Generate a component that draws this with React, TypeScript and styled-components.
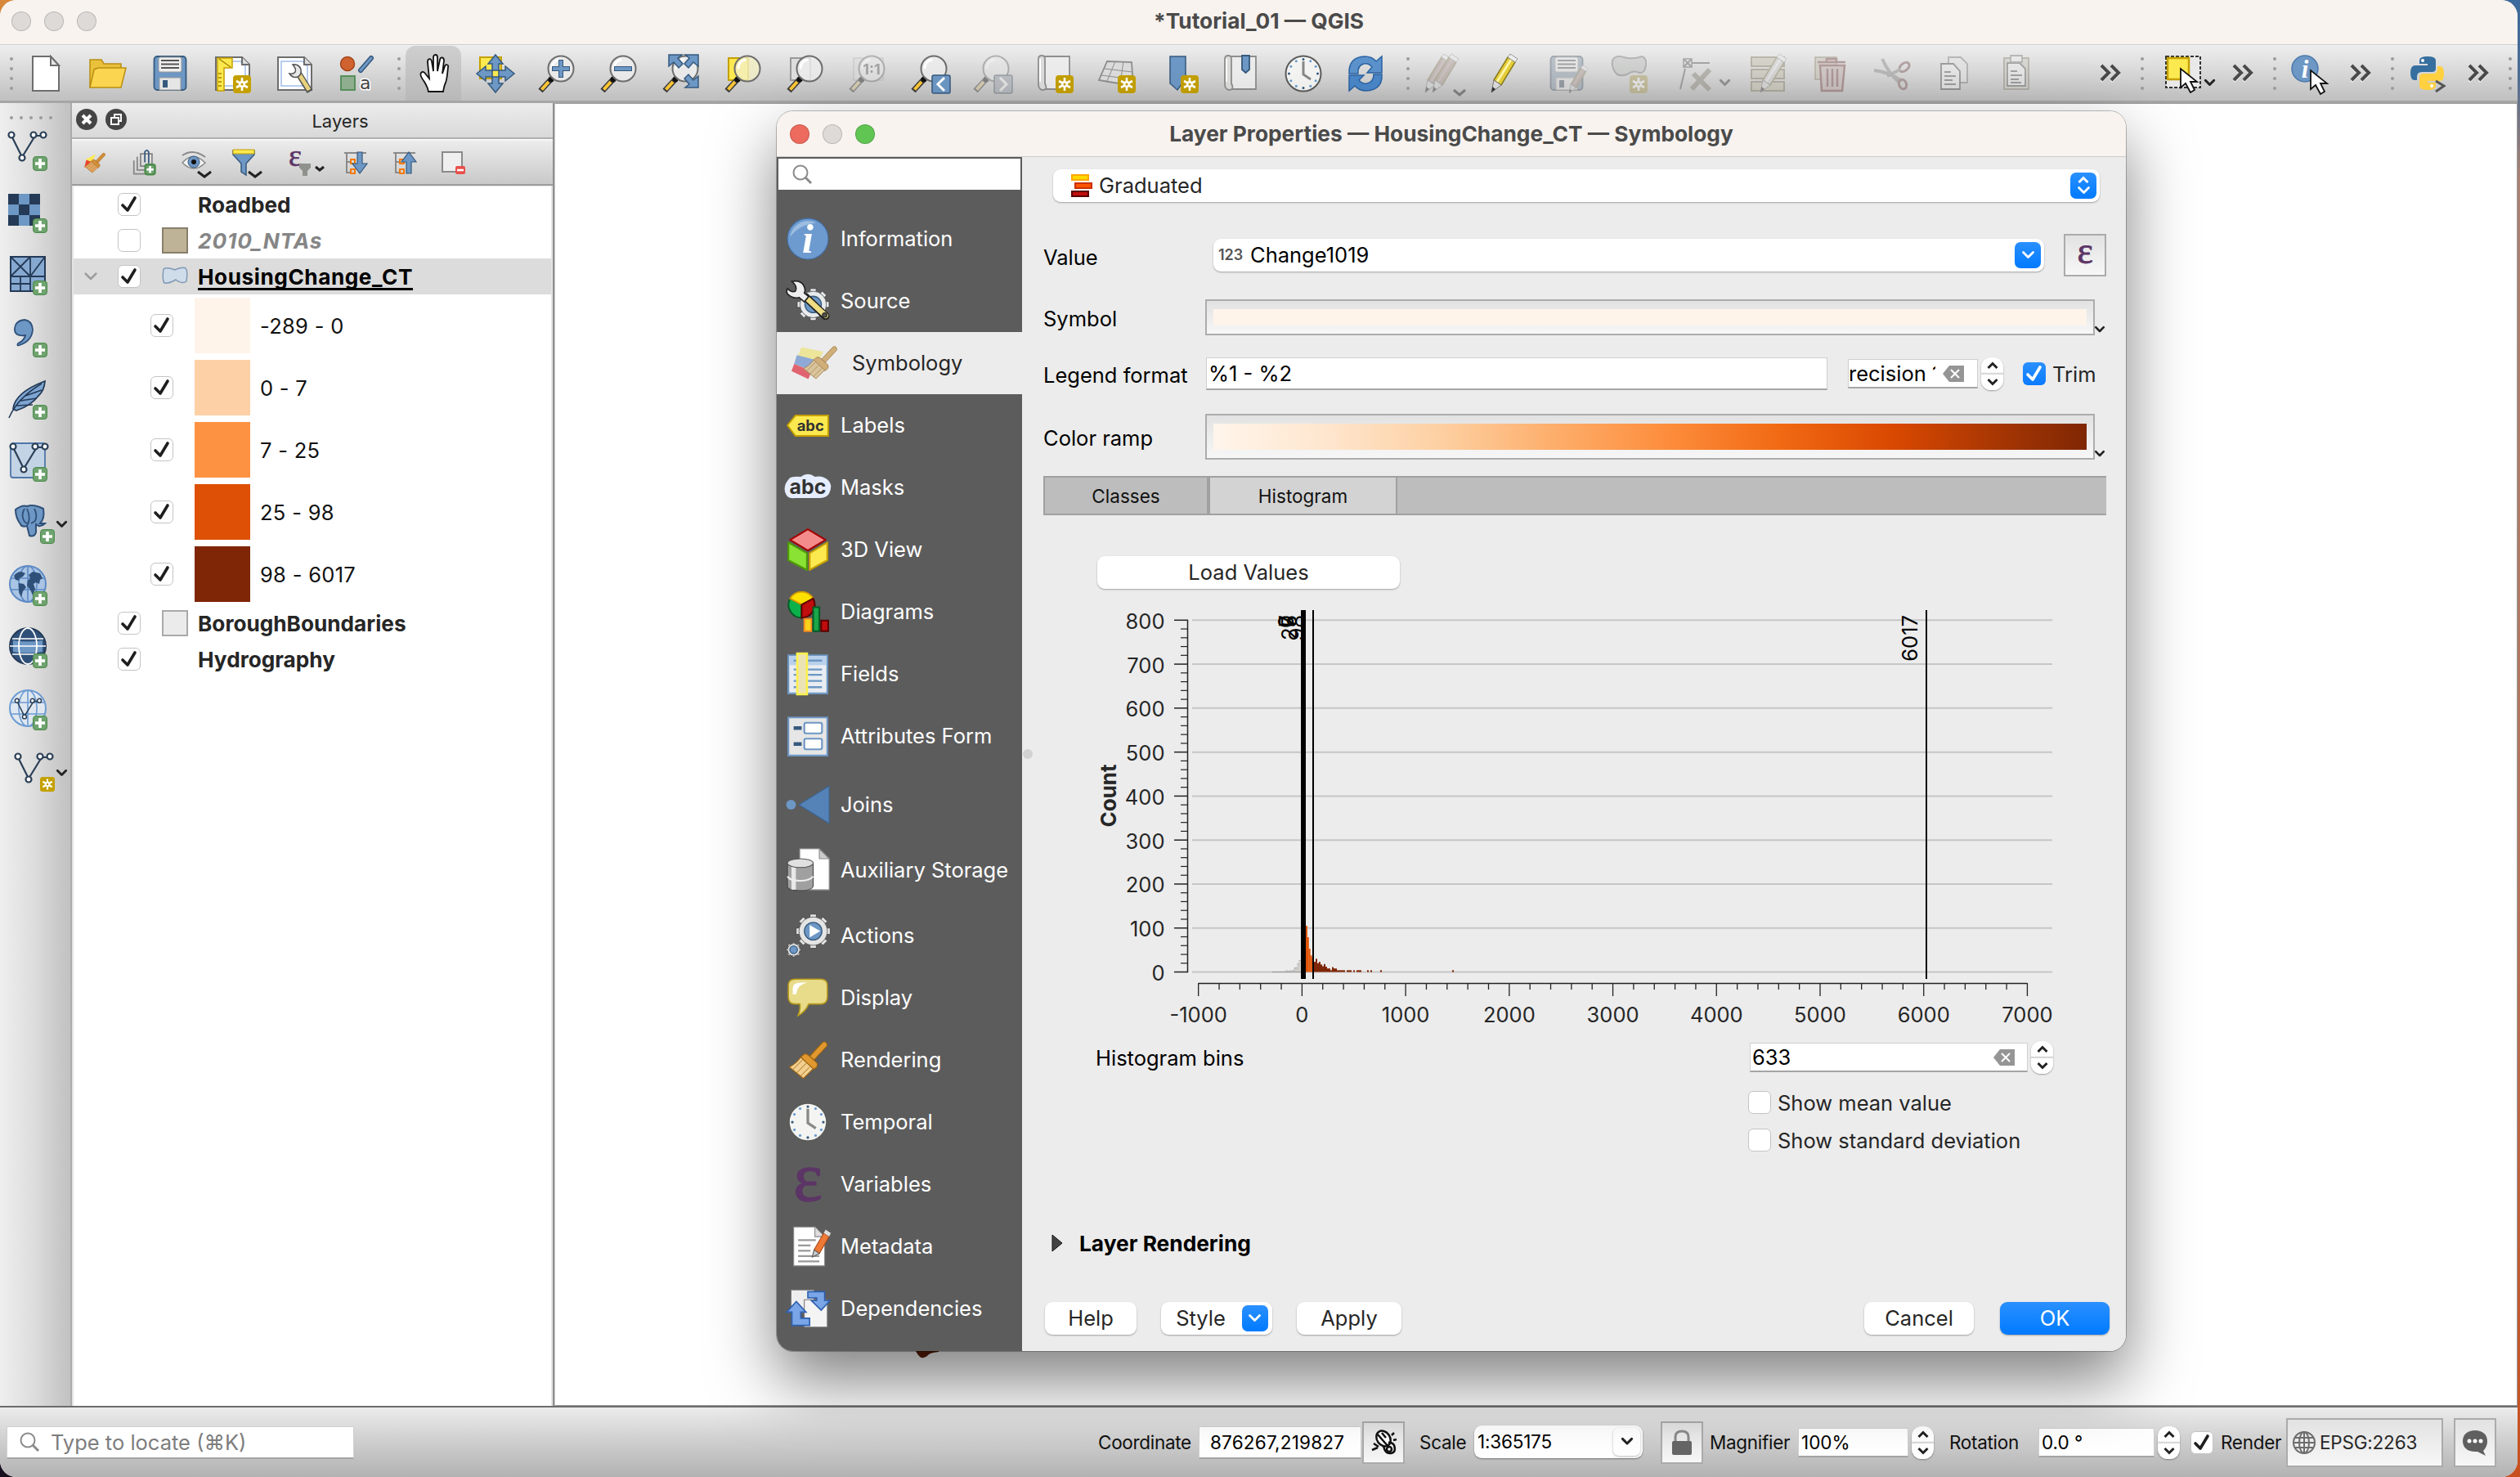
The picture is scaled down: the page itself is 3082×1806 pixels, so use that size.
import React from "react";
import styled, { createGlobalStyle, css } from "styled-components";

const GlobalStyle = createGlobalStyle`
  * { box-sizing: border-box; }
  body {
    margin: 0;
    font-family: Inter, "DejaVu Sans", sans-serif;
    font-size: 25.5px;
    color: #262626;
  }
  svg { display: block; flex: none; overflow: visible; }
`;

/* ---------- window frame ---------- */

const Desktop = styled.div`
  width: 3082px;
  height: 1806px;
  overflow: hidden;
  position: relative;
  background:
    linear-gradient(#3b6a9c 0, #4b6c94 5%, #a98273 12%, #b4735a 60%, #c8501f 100%) right / 60px 100% no-repeat,
    linear-gradient(#d8883a 0, #16101e 100%);
`;
const AppWindow = styled.div`
  width: 3079px;
  height: 1806px;
  border-radius: 20px;
  overflow: hidden;
  display: flex;
  flex-direction: column;
  background: #ececec;
`;
const TitleBar = styled.div`
  height: 54px;
  flex: none;
  display: flex;
  align-items: center;
  background: #f8f3ef;
  padding: 0 14px 2px;
  gap: 16px;
`;
const Light = styled.span<{ $color?: string }>`
  width: 24px;
  height: 24px;
  border-radius: 50%;
  background: ${(p) => p.$color || "#dedad7"};
  border: 1px solid rgba(0, 0, 0, 0.16);
`;
const Title = styled.div`
  flex: 1;
  text-align: center;
  font-weight: 700;
  font-size: 26.3px;
  color: #4a4a4a;
  padding-right: 120px;
  padding-bottom: 1px;
  white-space: nowrap;
`;

/* ---------- main toolbar ---------- */

const Toolbar = styled.div`
  height: 72px;
  flex: none;
  display: flex;
  align-items: stretch;
  background: linear-gradient(#eeeeee, #dcdcdc 40%, #c2c2c2 94%);
  border-top: 1px solid #cfcfcf;
  border-bottom: 3px solid #a6a6a6;
`;
const Tool = styled.div<{ $w?: number; $pl?: number; $active?: boolean; $off?: boolean }>`
  width: ${(p) => p.$w || 76}px;
  flex: none;
  display: flex;
  align-items: center;
  justify-content: center;
  padding: 2px 0 0 ${(p) => p.$pl || 0}px;
  ${(p) =>
    p.$active &&
    css`
      width: 68px;
      margin: 1px 4px 0;
      background: linear-gradient(#cfcfcf, #b8b8b8);
      border-radius: 12px 12px 0 0;
    `}
  ${(p) =>
    p.$off &&
    css`
      & > svg {
        opacity: 0.42;
        filter: grayscale(0.55);
      }
    `}
`;
const LowMenu = styled.span`
  padding: 22px 0 0 2px;
`;
const HandleBox = styled.div<{ $row?: boolean }>`
  flex: none;
  display: flex;
  gap: 8px;
  ${(p) =>
    p.$row
      ? css`
          padding: 16px 0 0 12px;
          height: 21px;
        `
      : css`
          flex-direction: column;
          width: 18px;
          padding: 15px 0 0 12px;
        `}
  & > i {
    width: 4px;
    height: 4px;
    border-radius: 2px;
    background: #9b9b9b;
    flex: none;
  }
`;
const More = styled.div<{ $ml?: number }>`
  width: 50px;
  margin-left: ${(p) => p.$ml || 0}px;
  display: flex;
  align-items: center;
  justify-content: center;
  padding-top: 2px;
`;

const Handle = ({ row }: { row?: boolean }) => (
  <HandleBox $row={row}>
    <i />
    <i />
    <i />
    <i />
    {row && <i />}
  </HandleBox>
);
const Chevron = ({ w = 12, color = "#222", sw = 3 }: { w?: number; color?: string; sw?: number }) => (
  <svg width={w} height={w * 0.6} viewBox="0 0 20 12">
    <path d="M2 2l8 8 8-8" fill="none" stroke={color} strokeWidth={(sw * 20) / w} strokeLinecap="round" strokeLinejoin="round" />
  </svg>
);
const DoubleArrow = () => (
  <svg width="26" height="22" viewBox="0 0 26 22">
    <path d="M2 3l9 9-9 9M14 3l9 9-9 9" fill="none" stroke="#fff" strokeWidth="3" opacity=".7" />
    <path d="M2 1l9 9-9 9M14 1l9 9-9 9" fill="none" stroke="#4a4a4a" strokeWidth="4" />
  </svg>
);

/* ---------- icon building blocks ---------- */

const Svg = ({ s = 48, children }: { s?: number; children?: React.ReactNode }) => (
  <svg width={s} height={s} viewBox="0 0 48 48" fill="none">
    {children}
  </svg>
);
const NewBadge = ({ x = 25, y = 26 }: { x?: number; y?: number }) => (
  <g transform={`translate(${x} ${y})`}>
    <rect width="22" height="22" rx="4" fill="#c4a000" />
    <path d="M11 3v16M4 7l14 8M18 7L4 15" stroke="#fff" strokeWidth="2.6" />
    <circle cx="11" cy="11" r="4" fill="#fff" />
    <circle cx="11" cy="11" r="1.6" fill="#c4a000" />
  </g>
);
const PlusBadge = ({ x = 30, y = 30, s = 18 }: { x?: number; y?: number; s?: number }) => (
  <g transform={`translate(${x} ${y}) scale(${s / 18})`}>
    <rect x=".5" y=".5" width="17" height="17" rx="3.5" fill="#6fa36f" stroke="#4b8a4b" />
    <path d="M9 3v12M3 9h12" stroke="#fff" strokeWidth="3.6" />
  </g>
);
const Lens = ({ children, glass = "#eeeeee" }: { children?: React.ReactNode; glass?: string }) => (
  <g>
    <path d="M15 32L3 45" stroke="#3a3a3a" strokeWidth="7" />
    <path d="M13 34L4.500 43.500" stroke="#fcc636" strokeWidth="4" />
    <circle cx="16" cy="31" r="3.500" fill="#111" />
    <circle cx="28" cy="18" r="15.500" fill={glass} fillOpacity=".8" stroke="#6d6d6d" strokeWidth="2" />
    <path d="M17 17a11 11 0 018-10" stroke="#fff" strokeWidth="3" strokeLinecap="round" />
    {children}
  </g>
);
const Pencil = ({ fill = "#e6cf3a", shine = "#fff8b0", x = 0 }: { fill?: string; shine?: string; x?: number }) => (
  <g transform={`translate(${x} 0)`}>
    <path d="M10 32L27 4l9 6-17 28z" fill={fill} stroke="#8a7b1c" strokeWidth="1.500" />
    <path d="M14 34L31 7" stroke={shine} strokeWidth="2.500" />
    <path d="M27 4l3-4 9 6-3 4z" fill="#eee" stroke="#999" />
    <path d="M10 32l9 6-12 9z" fill="#ddd" stroke="#777" />
    <path d="M8.500 40L7 47l5-4z" fill="#333" />
  </g>
);
const Clock = () => (
  <g>
    <circle cx="24" cy="24" r="21.500" fill="#f4f5f3" stroke="#5a5c5a" strokeWidth="2" />
    {Array.from({ length: 12 }, (_, i) => {
      const a = (i * Math.PI) / 6;
      return <circle key={i} cx={24 + 17.5 * Math.sin(a)} cy={24 - 17.5 * Math.cos(a)} r="1.500" fill={i % 3 ? "#6a9ccf" : "#36597d"} />;
    })}
    <path d="M24 9v16l9 6" stroke="#888a85" strokeWidth="3" />
  </g>
);
const Cursor = ({ x = 0, y = 0 }: { x?: number; y?: number }) => (
  <path transform={`translate(${x} ${y})`} d="M0 0v23l6-5 6 11 5-3-5-10h8z" fill="#fff" stroke="#111" strokeWidth="1.800" />
);
const Gear = ({ cx, cy, r, fill = "#e4e4e4" }: { cx: number; cy: number; r: number; fill?: string }) => (
  <g>
    {Array.from({ length: 8 }, (_, i) => (
      <rect key={i} x={cx - r * 0.22} y={cy - r * 1.2} width={r * 0.44} height={r * 0.5} fill={fill} stroke="#444" strokeWidth=".8" transform={`rotate(${i * 45} ${cx} ${cy})`} />
    ))}
    <circle cx={cx} cy={cy} r={r} fill={fill} stroke="#555" strokeWidth=".8" />
    <circle cx={cx} cy={cy} r={r * 0.9} fill={fill} />
    <circle cx={cx} cy={cy} r={r * 0.62} fill="#6d97c4" stroke="#36597d" strokeWidth="1.200" />
  </g>
);
const Epsilon = ({ x, y, size }: { x: number; y: number; size: number }) => (
  <text x={x} y={y} fontSize={size} fontFamily="Liberation Serif, serif" fill="#5c3566" stroke="#5c3566" strokeWidth={size / 60} textAnchor="middle">
    ε
  </text>
);
const Brush = ({ handle = "#c9a467", bristle = "#d5bc92", stroke = "#8a6a38" }: { handle?: string; bristle?: string; stroke?: string }) => (
  <g>
    <path d="M26 20L40 5q3-3 5 0t-1 5L31 24z" fill={handle} stroke={stroke} />
    <path d="M19 18q3-2 6 1l9 8q2 3-1 6l-3 2-14-14z" fill={handle} stroke={stroke} />
    <path d="M16 21l14 13-11 11L3 32q7-3 13-11z" fill={bristle} stroke={stroke} />
    <path d="M18 24L7 35M22 28L11 39M26 32L15 43" stroke={stroke} strokeWidth=".8" />
  </g>
);
const VectorV = () => (
  <g stroke="#2b4057" strokeWidth="2.200">
    <path d="M4 5l13 26L33 5h10" />
    {[[4, 4], [17, 32], [31, 4], [43, 4]].map(([x, y]) => (
      <circle key={x} cx={x} cy={y} r="3.500" fill="#fff" />
    ))}
  </g>
);
const Floppy = () => (
  <g>
    <rect x="4.500" y="3" width="39" height="41" rx="4" fill="#6d97c4" stroke="#36597d" strokeWidth="1.800" />
    <rect x="10" y="4" width="28" height="18" rx="2" fill="#eee" stroke="#999" />
    <path d="M13 8h22M13 12.500h22M13 17h22" stroke="#555" strokeWidth="2" />
    <rect x="11" y="29" width="26" height="15" fill="#e6e6e6" stroke="#999" />
    <rect x="15" y="32" width="6" height="9" fill="#36597d" />
  </g>
);
const Page = () => (
  <g>
    <path d="M4 4h32l9 9v31H4z" fill="#fff" stroke="#6d6d6d" strokeWidth="2" />
    <path d="M8 9h26l6 6v24H8z" stroke="#b8cdf0" strokeWidth="2" />
    <path d="M36 4v9h9" fill="#ddd" stroke="#6d6d6d" strokeWidth="2" />
  </g>
);
const MapSheet = () => (
  <g>
    <path d="M8 3h34v40H10" fill="#ececec" stroke="#8d8f8c" strokeWidth="1.800" />
    <path d="M4 6q0-4 4-4t4 4v30q4 8-3 8-5-1-5-7z" fill="#dcdcdc" stroke="#8d8f8c" strokeWidth="1.800" />
    <path d="M6 6v28" stroke="#fff" strokeWidth="2" />
  </g>
);
const arrowUp = "M0 -23l9 11h-5v8h-8v-8h-5z";

/* ---------- toolbar icons ---------- */

const I = {
  newDoc: (
    <Svg>
      <path d="M8 3h22l10 11v31H8z" fill="#fff" stroke="#6d6d6d" strokeWidth="2" />
      <path d="M30 3v11h10z" fill="#e4e4e4" stroke="#6d6d6d" strokeWidth="2" />
    </Svg>
  ),
  open: (
    <Svg>
      <path d="M2 41V7h14l3 5h21v6H9z" fill="#e9c13a" stroke="#b98e12" strokeWidth="1.500" />
      <path d="M7 19l5-2h34l-6 24H2z" fill="#fbd54f" stroke="#b98e12" strokeWidth="1.500" />
    </Svg>
  ),
  save: (
    <Svg>
      <Floppy />
    </Svg>
  ),
  layout: (
    <Svg>
      <Page />
      <path d="M6 5h18v12H14v28H6z" fill="#fce94f" stroke="#c4a000" strokeWidth="1.500" />
      <path d="M7 24h4M7 29h4M7 34h4M7 39h4M8 6l14 10" stroke="#a58400" strokeWidth="1.500" />
      <NewBadge />
    </Svg>
  ),
  manager: (
    <Svg>
      <Page />
      <path d="M28 22l15 24" stroke="#555" strokeWidth="8" />
      <path d="M30 25l12 19" stroke="#e8d27e" strokeWidth="5" />
      <path d="M22 13q8-1 10 6 1 7-4 9-6 2-10-4 5 1 7-2t-3-9z" fill="#e8e8e8" stroke="#555" strokeWidth="1.500" />
    </Svg>
  ),
  style: (
    <Svg>
      <circle cx="13" cy="12" r="8.500" fill="#d0622f" stroke="#a3431a" strokeWidth="1.500" />
      <path d="M42 5L29 20" stroke="#36597d" strokeWidth="6" strokeLinecap="round" />
      <path d="M42 5L29 20" stroke="#6d97c4" strokeWidth="3" strokeLinecap="round" />
      <rect x="5" y="27" width="17" height="17" fill="#8fae90" stroke="#4f8a53" strokeWidth="1.800" />
      <text x="28" y="43" fontSize="22" fontFamily="DejaVu Sans, sans-serif" fill="#444" stroke="#fff" strokeWidth="3" paintOrder="stroke">
        a
      </text>
    </Svg>
  ),
  pan: (
    <Svg>
      <path
        d="M18 45c-1-6-3-8-5-12-3-4-6-9-4-11s4-1 6 2l4 5-2-20c0-5 4-5 5-1l2 12V3c0-4 5-4 5 0v17l3-14c1-4 5-3 5 1l-2 16 3-9c1-3 5-2 4 1-1 8-1 14-3 19-2 4-2 6-3 11z"
        fill="#fff"
        stroke="#111"
        strokeWidth="1.800"
      />
    </Svg>
  ),
  panSel: (
    <Svg>
      <rect x="5" y="4" width="26" height="26" fill="#fce94f" stroke="#c4a000" strokeWidth="2" />
      {[0, 90, 180, 270].map((a) => (
        <path key={a} d={arrowUp} transform={`translate(24 24) rotate(${a})`} fill="#6d97c4" stroke="#36597d" strokeWidth="1.500" />
      ))}
    </Svg>
  ),
  zoomIn: (
    <Svg>
      <Lens>
        <path d="M28 7v22M17 18h22" stroke="#36597d" strokeWidth="6" />
        <path d="M28 8v20M18 18h20" stroke="#6d97c4" strokeWidth="4" />
      </Lens>
    </Svg>
  ),
  zoomOut: (
    <Svg>
      <Lens>
        <path d="M17 18h22" stroke="#36597d" strokeWidth="6" />
        <path d="M18 18h20" stroke="#6d97c4" strokeWidth="4" />
      </Lens>
    </Svg>
  ),
  zoomFull: (
    <Svg>
      <Lens />
      {["translate(4 0)", "translate(48 0) scale(-1 1)", "translate(48 42) scale(-1 -1)"].map((t) => (
        <path key={t} transform={t} d="M4 1h16l-5 4 6 7-5 5-6-7-6 5z" fill="#6d97c4" stroke="#36597d" strokeWidth="1.500" />
      ))}
    </Svg>
  ),
  zoomSel: (
    <Svg>
      <rect x="5" y="5" width="24" height="27" fill="#fce94f" stroke="#c4a000" strokeWidth="2" />
      <Lens glass="#f3efc4" />
    </Svg>
  ),
  zoomLayer: (
    <Svg>
      <rect x="5" y="5" width="24" height="27" fill="#dedede" stroke="#9a9a9a" strokeWidth="2" />
      <Lens />
    </Svg>
  ),
  zoomNative: (
    <Svg>
      <rect x="6" y="5" width="36" height="27" fill="#ddd" stroke="#9a9a9a" />
      <Lens>
        <text x="28" y="25" fontSize="18" fontWeight="700" textAnchor="middle" fill="#555">
          1:1
        </text>
      </Lens>
    </Svg>
  ),
  zoomLast: (
    <Svg>
      <Lens />
      <rect x="26" y="26" width="22" height="22" rx="2" fill="#6d97c4" stroke="#36597d" strokeWidth="1.500" />
      <path d="M41 29l-8 8 8 8" stroke="#fff" strokeWidth="3" />
    </Svg>
  ),
  zoomNext: (
    <Svg>
      <Lens />
      <rect x="26" y="26" width="22" height="22" rx="2" fill="#8fa3b8" stroke="#36597d" strokeWidth="1.500" />
      <path d="M33 29l8 8-8 8" stroke="#fff" strokeWidth="3" />
    </Svg>
  ),
  newMap: (
    <Svg>
      <MapSheet />
      <NewBadge />
    </Svg>
  ),
  new3d: (
    <Svg>
      <path d="M12 9l30 1 2 29-18-3-24-4z" fill="#dcdcdc" stroke="#8d8f8c" strokeWidth="1.800" />
      <path d="M22 9L12 33M32 9l-4 27M9 18l34 4M5 26l38 5" stroke="#8d8f8c" />
      <NewBadge />
    </Svg>
  ),
  newBookmark: (
    <Svg>
      <path d="M13 3h19v27l-10 14-9-8z" fill="#6d97c4" stroke="#36597d" strokeWidth="1.500" />
      <NewBadge x={26} />
    </Svg>
  ),
  bookmarks: (
    <Svg>
      <MapSheet />
      <path d="M25 2h9v17l-4.500 4L25 19z" fill="#6d97c4" stroke="#36597d" strokeWidth="1.800" />
    </Svg>
  ),
  clock: (
    <Svg>
      <Clock />
    </Svg>
  ),
  refresh: (
    <Svg>
      <path d="M4 24Q3 4 23 3q9 0 14 6l7-6v20H26l6-7q-4-5-10-4-8 2-7 12z" fill="#5c92cc" stroke="#2c63a3" strokeWidth="1.500" />
      <path d="M44 25q1 19-19 20-9 0-14-6l-7 6V26h18l-6 6q4 5 10 4 8-2 8-11z" fill="#4a86c8" stroke="#2c63a3" strokeWidth="1.500" />
    </Svg>
  ),
  pencils: (
    <Svg>
      <Pencil fill="#b98a7c" shine="#c9a194" x={-4} />
      <Pencil fill="#b98a7c" shine="#c9a194" x={5} />
      <path d="M38 44l7 6 7-6" stroke="#222" strokeWidth="3" />
    </Svg>
  ),
  pencil: (
    <Svg>
      <Pencil x={1} />
    </Svg>
  ),
  saveEdits: (
    <Svg>
      <Floppy />
      <g transform="translate(22 14) scale(.72)">
        <Pencil fill="#b98a7c" shine="#c9a194" />
      </g>
    </Svg>
  ),
  addPoly: (
    <Svg>
      <path d="M4 8q3-7 14-4t22-1q6 2 5 10-1 11-8 10-8-4-15 2-12 4-16-5-3-6-2-12z" fill="#b9c0b9" stroke="#777" strokeWidth="2" />
      <NewBadge />
    </Svg>
  ),
  vertex: (
    <Svg>
      <rect x="6" y="6" width="10" height="10" stroke="#555" strokeWidth="1.500" />
      <path d="M6 6l10 10M16 6L6 16M16 11h22M8 18L2 43" stroke="#555" strokeWidth="2" />
      <path d="M16 43l22-24M18 24l20 20" stroke="#8c815f" strokeWidth="6" />
    </Svg>
  ),
  attrTable: (
    <Svg>
      {[4, 19, 34].map((y) => (
        <path key={y} d={`M4 ${y}h40v11H4z`} fill="#cdbf8e" stroke="#8d7a3c" strokeWidth="2" />
      ))}
      <Pencil x={8} fill="#ccc" shine="#eee" />
    </Svg>
  ),
  trash: (
    <Svg>
      <rect x="6" y="4" width="26" height="27" fill="#cdbf8e" stroke="#8d7a3c" strokeWidth="1.500" />
      <path d="M12 14h30l-3 31H14zM9 10h34M20 10V6h12v4M21 18v22M27 18v22M33 18v22" fill="#d9a7a7" stroke="#a33" strokeWidth="2.500" />
    </Svg>
  ),
  cut: (
    <Svg>
      <path d="M2 20q18 2 34 13M12 6q8 18 20 28" stroke="#888" strokeWidth="4" />
      <ellipse cx="39" cy="16" rx="7" ry="4.500" transform="rotate(-40 39 16)" stroke="#a04848" strokeWidth="3" />
      <ellipse cx="37" cy="37" rx="4.500" ry="6" transform="rotate(-20 37 37)" stroke="#a04848" strokeWidth="3" />
      <path d="M18 27l16-8" stroke="#888" strokeWidth="4" />
    </Svg>
  ),
  copy: (
    <Svg>
      <path d="M17 4h15l8 8v23H17z" fill="#e8e8e8" stroke="#777" strokeWidth="1.800" />
      <path d="M8 12h15l8 9v22H8z" fill="#f4f4f4" stroke="#444" strokeWidth="1.800" />
      <path d="M12 22h8M12 27h14M12 32h10M12 37h14" stroke="#555" strokeWidth="2" />
    </Svg>
  ),
  paste: (
    <Svg>
      <path d="M9 5h30v38H9z" fill="#cfc9ae" stroke="#8d845c" strokeWidth="2" />
      <path d="M13 11h15l7 7v21H13z" fill="#f4f4f4" stroke="#555" strokeWidth="1.800" />
      <path d="M17 2h14v8H17z" fill="#eee" stroke="#777" strokeWidth="1.800" />
      <path d="M17 21h8M17 26h14M17 31h10M17 35h13" stroke="#555" strokeWidth="2" />
    </Svg>
  ),
  select: (
    <Svg>
      <rect x="3" y="3" width="42" height="38" fill="#e9e9e9" stroke="#333" strokeWidth="2" strokeDasharray="4 2" />
      <rect x="5" y="5" width="26" height="26" fill="#fce94f" stroke="#c4a000" strokeWidth="2.500" />
      <Cursor x={21} y={18} />
    </Svg>
  ),
  identify: (
    <Svg>
      <circle cx="19" cy="18" r="16" fill="#6d97c4" stroke="#4b78ab" strokeWidth="1.500" />
      <text x="19" y="29" fontSize="31" fontFamily="Liberation Serif, serif" fontStyle="italic" fontWeight="700" fill="#fff" textAnchor="middle">
        i
      </text>
      <Cursor x={26} y={20} />
    </Svg>
  ),
  python: (
    <Svg>
      <path d="M15 12V8q0-5 10-5t10 5v10q0 4-5 4H18q-6 0-6 6v4H9q-5 0-5-9t6-9h15v-2z" fill="#366f9f" />
      <circle cx="19" cy="8" r="2" fill="#fff" />
      <path d="M37 15h3q5 0 5 9t-5 9H25v2h10v4q0 5-10 5t-10-5V29q0-5 5-5h11q6 0 6-6z" fill="#ffd040" />
      <circle cx="30" cy="39" r="2" fill="#fff" />
      <path d="M35 33l10 6-10 7" stroke="#555" strokeWidth="3" />
    </Svg>
  ),
};

/* ---------- left dock icons ---------- */

const Globe = ({ fill, stroke }: { fill: string; stroke: string }) => (
  <g stroke={stroke} strokeWidth="1.600">
    <circle cx="24" cy="21" r="22" fill={fill} strokeWidth="2" />
    <ellipse cx="24" cy="21" rx="11" ry="22" />
    <path d="M24-1v44M3 14h42M3 28h42" />
  </g>
);
const dockIcons: { icon: React.ReactNode; menu?: boolean }[] = [
  { icon: <g><VectorV /><PlusBadge /></g> },
  {
    icon: (
      <g>
        {[0, 1, 2, 3, 4, 5, 6, 7, 8].map((i) => (
          <rect key={i} x={(i % 3) * 13} y={Math.floor(i / 3) * 13} width="13" height="13" fill={i % 2 ? "#6d97c4" : "#243a56"} />
        ))}
        <PlusBadge />
      </g>
    ),
  },
  {
    icon: (
      <g>
        <path d="M3 1h42v42H3z" fill="#86a9d1" stroke="#243a56" strokeWidth="2" />
        <path d="M27 1v42M3 25h42M3 34h25M15 25v18M3 1l24 24M27 1L3 25M45 1L27 25" stroke="#243a56" strokeWidth="1.800" />
        <PlusBadge />
      </g>
    ),
  },
  {
    icon: (
      <g>
        <path d="M8 12q1-9 12-10 9 1 10 12-1 14-16 19-4 1-2-2 8-4 9-10-14 2-13-9z" fill="#6d97c4" stroke="#2f5079" strokeWidth="1.800" />
        <PlusBadge />
      </g>
    ),
  },
  {
    icon: (
      <g>
        <path d="M6 35q2-20 39-34-1 12-8 18-9 12-27 18z" fill="#7ea5d2" stroke="#243a56" strokeWidth="1.800" />
        <path d="M1 46q10-24 40-42M10 31l20-1M15 25l20-3M21 19l20-7" stroke="#243a56" strokeWidth="1.500" />
        <PlusBadge />
      </g>
    ),
  },
  {
    icon: (
      <g>
        <rect x="3" y="1" width="42" height="42" rx="3" fill="#c3d3e6" stroke="#4f77a8" strokeWidth="1.800" />
        <g transform="translate(2 1)">
          <VectorV />
        </g>
        <PlusBadge />
      </g>
    ),
  },
  {
    menu: true,
    icon: (
      <g transform="translate(8 0)">
        <path d="M1 6q8-6 14-4 8-3 20 3 2 12-4 18h6q-4 4-8 3l-3-2v10q-2 6-8 4l-3-12q-6 2-8-2-6-8-6-18z" fill="#6d97c4" stroke="#2f5079" strokeWidth="2" />
        <path d="M12 5q-5 8 0 16l4 3q4-8-1-19M24 5q4 8 1 15l-5 3" stroke="#2f5079" strokeWidth="1.800" />
        <PlusBadge x={31} />
      </g>
    ),
  },
  {
    icon: (
      <g>
        <Globe fill="#a9c4e4" stroke="#5c8ac4" />
        <path d="M7 11q4-5 9-5l5 2-3 4-4 2-1 3-4-1zM13 20l6 1 3 4-4 5-2 7-3-6zM25 10l5-4 9 2 3 6-3 2-1 5-4-2-3 2 2 6-3 8-3-7-4-5 1-6 3-3z" fill="#2f5079" />
        <PlusBadge />
      </g>
    ),
  },
  {
    icon: (
      <g>
        <circle cx="24" cy="21" r="22" fill="#2f5079" stroke="#243a56" strokeWidth="2" />
        <path d="M6 14q18 3 36 0v14q-18 3-36 0z" fill="#6d97c4" />
        <ellipse cx="24" cy="21" rx="11" ry="22" stroke="#fff" strokeWidth="1.800" />
        <path d="M5 12h38M2 21h44M5 31h38" stroke="#fff" strokeWidth="1.500" />
        <PlusBadge />
      </g>
    ),
  },
  {
    icon: (
      <g>
        <Globe fill="#dfe7f0" stroke="#6d9bd2" />
        <g transform="translate(8 9) scale(.7)">
          <VectorV />
        </g>
        <PlusBadge />
      </g>
    ),
  },
  {
    menu: true,
    icon: (
      <g transform="translate(8 0)">
        <VectorV />
        <g transform="translate(31 29) scale(.82)">
          <NewBadge x={0} y={0} />
        </g>
      </g>
    ),
  },
];

const Body = styled.div`
  flex: 1;
  min-height: 0;
  display: flex;
`;
const Dock = styled.div`
  width: 88px;
  flex: none;
  background: linear-gradient(90deg, #efefef, #dcdcdc 50%, #c3c3c3 95%);
  border-right: 2px solid #ababab;
`;
const DockTool = styled.div`
  height: 76px;
  padding-left: 10px;
  display: flex;
  align-items: center;
  gap: 11px;
`;

/* ---------- layers panel ---------- */

const Panel = styled.div`
  width: 590px;
  flex: none;
  display: flex;
  flex-direction: column;
  background: #e4e4e4;
  border-right: 2px solid #8f8f8f;
`;
const PanelHead = styled.div`
  height: 44px;
  flex: none;
  display: flex;
  align-items: center;
  gap: 10px;
  padding: 0 9px 3px 5px;
  background: linear-gradient(#ececec, #d9d9d9);
  border-bottom: 2px solid #b0b0b0;
`;
const PanelTitle = styled.div`
  flex: 1;
  text-align: center;
  font-size: 22px;
  padding-top: 5px;
`;
const PanelTools = styled.div`
  height: 57px;
  flex: none;
  display: flex;
  align-items: center;
  border-top: 2px solid #f8f8f8;
  border-bottom: 2px solid #9d9d9d;
  background: linear-gradient(#ececec, #c9c9c9);
  padding-left: 14px;
`;
const PanelTool = styled.div<{ $w?: number }>`
  width: ${(p) => p.$w || 60}px;
  height: 40px;
  display: flex;
  justify-content: flex-start;
  align-items: center;
`;
const Tree = styled.div`
  flex: 1;
  background: #fff;
  margin: 1px 2px 0 2px;
`;
const Row = styled.div<{ $h?: number; $sel?: boolean; $child?: boolean }>`
  height: ${(p) => p.$h || 44}px;
  display: flex;
  align-items: center;
  padding-left: ${(p) => (p.$child ? 94 : 54)}px;
  background: ${(p) => (p.$sel ? "#dcdcdc" : "transparent")};
`;
const Expander = styled.span`
  width: 54px;
  margin-left: -54px;
  padding-left: 13px;
`;
const CheckBox = styled.span<{ $blue?: boolean }>`
  width: 28px;
  height: 28px;
  flex: none;
  border-radius: 6px;
  background: ${(p) => (p.$blue ? "linear-gradient(#2a90ff, #0a7bff)" : "#fff")};
  border: ${(p) => (p.$blue ? "0" : "1px solid #c4c4c4")};
  display: flex;
  align-items: center;
  justify-content: center;
`;
const LayerIcon = styled.span<{ $fill?: string; $edge?: string }>`
  width: 32px;
  height: 32px;
  margin: 0 12px 0 26px;
  flex: none;
  background: ${(p) => p.$fill || "transparent"};
  border: ${(p) => (p.$edge ? `2px solid ${p.$edge}` : "0")};
`;
const LayerName = styled.span<{ $dim?: boolean; $under?: boolean }>`
  font-weight: 700;
  font-size: 26.2px;
  ${(p) =>
    p.$dim &&
    css`
      font-style: italic;
      color: #868686;
      letter-spacing: 0.9px;
    `}
  ${(p) =>
    p.$under &&
    css`
      color: #000;
      border-bottom: 3px solid #000;
      line-height: 27px;
      margin-top: 3px;
      letter-spacing: 0.55px;
    `}
`;
const Swatch = styled.span<{ $fill: string }>`
  width: 68px;
  height: 68px;
  margin: 0 12px 0 26px;
  background: ${(p) => p.$fill};
`;
const ClassName = styled.span`
  color: #111;
  letter-spacing: 0.3px;
`;
const Tick = ({ color = "#1e1e1e" }: { color?: string }) => (
  <svg width="20" height="20" viewBox="0 0 20 20">
    <path d="M2 11l6 6L17 2" fill="none" stroke={color} strokeWidth="3.600" strokeLinecap="round" strokeLinejoin="round" />
  </svg>
);
const Check = ({ on, blue }: { on?: boolean; blue?: boolean }) => (
  <CheckBox $blue={blue}>{on && <Tick color={blue ? "#fff" : undefined} />}</CheckBox>
);

const classes = [
  ["#fff4ea", "-289 - 0"],
  ["#fdd1a5", "0 - 7"],
  ["#fd9243", "7 - 25"],
  ["#de5005", "25 - 98"],
  ["#7f2606", "98 - 6017"],
];

const LayersPanel = () => (
  <Panel>
    <PanelHead>
      <svg width="26" height="26" viewBox="0 0 26 26">
        <circle cx="13" cy="13" r="13" fill="#454545" />
        <path d="M8 8l10 10M18 8L8 18" stroke="#fff" strokeWidth="4" />
      </svg>
      <svg width="26" height="26" viewBox="0 0 26 26" fill="none" stroke="#fff" strokeWidth="2">
        <circle cx="13" cy="13" r="13" fill="#454545" stroke="none" />
        <path d="M11 10V7h8v8h-3" />
        <rect x="7" y="11" width="9" height="8" />
      </svg>
      <PanelTitle>Layers</PanelTitle>
    </PanelHead>
    <PanelTools>
      <PanelTool $w={60}>
        <svg width="28" height="28" viewBox="0 0 48 48" fill="none">
          <path d="M4 18L26 6l-8 16z" fill="#fce94f" />
          <path d="M2 34L6 18l16 6z" fill="#e8452f" />
          <Brush handle="#d08f3a" bristle="#e0a765" stroke="#b06a20" />
        </svg>
      </PanelTool>
      <PanelTool $w={60}>
        <svg width="28" height="31" viewBox="0 0 48 52" fill="none" stroke="#868686" strokeWidth="3">
          <path d="M3 22v28h26M10 14v28h18M17 8h24v26H17z" />
          <path d="M26 26V4q4-6 8 0v24" stroke="#36597d" />
          <g stroke="none">
            <PlusBadge x={26} y={30} s={22} />
          </g>
        </svg>
      </PanelTool>
      <PanelTool $w={62}>
        <svg width="34" height="40" viewBox="0 0 34 40" fill="none">
          <path d="M1 20q13-15 28 0-14 14-28 0z" fill="#f2f2f2" stroke="#8a8a8a" strokeWidth="1.500" />
          <circle cx="15" cy="19" r="7" fill="#6d97c4" stroke="#36597d" />
          <circle cx="15" cy="19" r="3" fill="#111" />
          <path d="M1 11q13-9 28 2" stroke="#8a8a8a" strokeWidth="2" />
          <path d="M20 31l8 6 8-6" stroke="#222" strokeWidth="3" />
        </svg>
      </PanelTool>
      <PanelTool $w={68}>
        <svg width="36" height="40" viewBox="0 0 36 40" fill="none">
          <path d="M1 5h26v5L17 21v14l-6-4V21L1 10z" fill="#6d97c4" stroke="#36597d" strokeWidth="1.500" />
          <path d="M1 4h26v5H1z" fill="#fce94f" stroke="#c4a000" />
          <path d="M20 31l8 6 8-6" stroke="#222" strokeWidth="3" />
        </svg>
      </PanelTool>
      <PanelTool $w={68}>
        <svg width="46" height="40" viewBox="0 0 46 40" fill="none">
          <Epsilon x={9} y={24} size={38} />
          <path d="M14 21h14v5l-4 4v6h-6v-6l-4-4z" fill="#8f918d" />
          <path d="M34 25l5 4 5-4" stroke="#222" strokeWidth="3" />
        </svg>
      </PanelTool>
      {[false, true].map((up) => (
        <PanelTool key={String(up)} $w={60}>
          <svg width="30" height="30" viewBox="0 0 30 30" fill="none">
            <path d="M1 3h27M4 3v24h5M4 14h5" stroke="#8a8a8a" strokeWidth="2" />
            <rect x="9" y="11" width="5" height="5" stroke="#f57900" strokeWidth="2" />
            <rect x="9" y="23" width="5" height="5" stroke="#f57900" strokeWidth="2" />
            <path d="M17 2h6v14h6l-9 12-9-12h6z" transform={up ? "rotate(180 20 15)" : undefined} fill="#6d97c4" stroke="#36597d" strokeWidth="1.200" />
          </svg>
        </PanelTool>
      ))}
      <PanelTool>
        <svg width="30" height="30" viewBox="0 0 30 30" fill="none">
          <path d="M1 2h24v24H1z" fill="#efefef" stroke="#8a8a8a" strokeWidth="2" />
          <rect x="17" y="19" width="12" height="10" rx="2" fill="#e8504c" />
          <path d="M19 24h8" stroke="#fff" strokeWidth="2.500" />
        </svg>
      </PanelTool>
    </PanelTools>
    <Tree>
      <Row>
        <Check on />
        <LayerIcon />
        <LayerName>Roadbed</LayerName>
      </Row>
      <Row>
        <Check />
        <LayerIcon $fill="#bfb397" $edge="#877f6b" />
        <LayerName $dim>2010_NTAs</LayerName>
      </Row>
      <Row $sel>
        <Expander>
          <Chevron w={16} sw={2.5} color="#9b9b9b" />
        </Expander>
        <Check on />
        <LayerIcon>
          <svg width="32" height="32" viewBox="0 0 32 32">
            <path d="M2 7q4-3 14 1 9-4 13-2 3 3 1 16-5 4-13-2-8 5-14 4-3-4-1-17z" fill="#cfdcea" stroke="#8099b5" strokeWidth="1.500" />
          </svg>
        </LayerIcon>
        <LayerName $under>HousingChange_CT</LayerName>
      </Row>
      {classes.map(([fill, name]) => (
        <Row key={name} $h={76} $child>
          <Check on />
          <Swatch $fill={fill} />
          <ClassName>{name}</ClassName>
        </Row>
      ))}
      <Row>
        <Check on />
        <LayerIcon $fill="#ebebeb" $edge="#a9a9a9" />
        <LayerName>BoroughBoundaries</LayerName>
      </Row>
      <Row>
        <Check on />
        <LayerIcon />
        <LayerName>Hydrography</LayerName>
      </Row>
    </Tree>
  </Panel>
);

const Canvas = styled.div`
  flex: 1;
  background: #fff;
  border: 1px solid #9b9b9b;
  border-left-color: #c8c8c8;
  position: relative;
`;
const MapScrap = styled.svg`
  position: absolute;
  left: 438px;
  top: 1518px;
`;

/* ---------- status bar ---------- */

const StatusBar = styled.div`
  height: 87px;
  flex: none;
  display: flex;
  align-items: center;
  border-top: 2px solid #6c6c6c;
  background: linear-gradient(#ececec, #d3d3d3 40%, #b2b2b2);
  font-size: 22.500px;
`;
const Field = styled.div<{ $w: number; $ml?: number; $h?: number; $pl?: number }>`
  width: ${(p) => p.$w}px;
  height: ${(p) => p.$h || 40}px;
  margin-left: ${(p) => p.$ml || 0}px;
  padding-left: ${(p) => p.$pl ?? 3}px;
  flex: none;
  display: flex;
  align-items: center;
  overflow: hidden;
  white-space: nowrap;
  background: #fff;
  color: #000;
  border: 1px solid #cfcfcf;
  border-bottom: 2px solid #a5a5a5;
`;
const StatusLabel = styled.span<{ $ml?: number; $w: number }>`
  margin-left: ${(p) => p.$ml || 0}px;
  width: ${(p) => p.$w}px;
  flex: none;
  color: #111;
  white-space: nowrap;
  letter-spacing: -0.3px;
`;
const Coordinates = styled.span`
  letter-spacing: 0.2px;
`;
const FrameButton = styled.div<{ $w: number; $h: number; $ml?: number }>`
  width: ${(p) => p.$w}px;
  height: ${(p) => p.$h}px;
  margin-left: ${(p) => p.$ml || 0}px;
  flex: none;
  display: flex;
  align-items: center;
  justify-content: center;
  gap: 4px;
  letter-spacing: -0.2px;
  border: 2px solid #ababab;
  background: linear-gradient(#e2e2e2, #f7f7f7);
`;
const CrsButton = styled(FrameButton)`
  justify-content: flex-start;
  padding-left: 5px;
`;
const StepBox = styled.div<{ $ml?: number }>`
  width: 27px;
  height: 40px;
  margin-left: ${(p) => p.$ml || 0}px;
  flex: none;
  border-radius: 12px;
  background: linear-gradient(#fff 46%, #d9d9d9 47%, #d9d9d9 52%, #fff 53%);
  box-shadow: 0 1px 2px rgba(0, 0, 0, 0.35);
  display: flex;
  flex-direction: column;
  align-items: center;
  justify-content: space-between;
  padding: 6px 0 6px;
`;
const Stepper = ({ ml }: { ml?: number }) => (
  <StepBox $ml={ml}>
    <svg width="14" height="8" viewBox="0 0 14 8">
      <path d="M1.500 7L7 1.500 12.500 7" fill="none" stroke="#222" strokeWidth="3" />
    </svg>
    <svg width="14" height="8" viewBox="0 0 14 8">
      <path d="M1.500 1L7 6.500 12.500 1" fill="none" stroke="#222" strokeWidth="3" />
    </svg>
  </StepBox>
);
const ScaleCombo = styled.div`
  width: 206px;
  height: 40px;
  margin: 0 0 2px 10px;
  flex: none;
  border-radius: 9px;
  background: #fff;
  color: #000;
  letter-spacing: -0.2px;
  box-shadow: 0 1px 2px rgba(0, 0, 0, 0.4);
  display: flex;
  align-items: center;
  justify-content: space-between;
  padding: 0 3px 0 4px;
`;
const ScaleDrop = styled.span`
  width: 33px;
  height: 34px;
  border-radius: 7px;
  box-shadow: 0 1px 3px rgba(0, 0, 0, 0.28);
  display: flex;
  align-items: center;
  justify-content: center;
`;
const Locator = styled(Field)`
  font-size: 25.500px;
  color: #7d7d7d;
  gap: 13px;
`;
const SearchGlyph = () => (
  <svg width="26" height="26" viewBox="0 0 26 26" fill="none" stroke="#8a8a8a">
    <circle cx="11" cy="11" r="8.500" strokeWidth="2" />
    <path d="M17 17l7 7" strokeWidth="3" />
  </svg>
);
const Space = styled.span<{ $w: number }>`
  width: ${(p) => p.$w}px;
  flex: none;
`;

const Status = () => (
  <StatusBar>
    <Locator $w={425} $ml={8} $pl={14}>
      <SearchGlyph />
      Type to locate (⌘K)
    </Locator>
    <StatusLabel $ml={910} $w={123}>Coordinate</StatusLabel>
    <Field $w={199} $pl={13}>
      <Coordinates>876267,219827</Coordinates>
    </Field>
    <FrameButton $w={52} $h={52} $ml={1}>
      <svg width="34" height="34" viewBox="0 0 34 34" fill="none" stroke="#111" strokeWidth="2.500">
        <ellipse cx="17" cy="12" rx="8" ry="10" fill="#fff" transform="rotate(-35 17 12)" />
        <path d="M10 7l13 15M15 5l5 6M5 18l6 4M3 26l7-3M27 8l3-3M29 14l4-1M17 21q2 10 9 9t4-10q-3-4-7-3" />
        <circle cx="24" cy="25" r="3" fill="#fff" />
      </svg>
    </FrameButton>
    <StatusLabel $ml={18} $w={57}>Scale</StatusLabel>
    <ScaleCombo>
      1:365175
      <ScaleDrop>
        <Chevron w={14} />
      </ScaleDrop>
    </ScaleCombo>
    <FrameButton $w={52} $h={52} $ml={22}>
      <svg width="26" height="32" viewBox="0 0 26 32">
        <path d="M5 15V9q0-7 8-7t8 7v6" fill="none" stroke="#8a8a8a" strokeWidth="3" />
        <rect x="1" y="14" width="24" height="17" rx="2" fill="#666" />
      </svg>
    </FrameButton>
    <StatusLabel $ml={8} $w={108}>Magnifier</StatusLabel>
    <Field $w={135} $h={36}>100%</Field>
    <Stepper ml={4} />
    <StatusLabel $ml={19} $w={109}>Rotation</StatusLabel>
    <Field $w={142} $h={36}>0.0 °</Field>
    <Stepper ml={4} />
    <Space $w={13} />
    <Check on />
    <StatusLabel $ml={9} $w={79}>Render</StatusLabel>
    <CrsButton $w={192} $h={60} $ml={1}>
      <svg width="30" height="30" viewBox="0 0 30 30" fill="none" stroke="#6d6d6d" strokeWidth="2">
        <circle cx="15" cy="15" r="13" />
        <ellipse cx="15" cy="15" rx="6" ry="13" />
        <path d="M15 2v26M2 15h26M4 9h22M4 21h22" />
      </svg>
      EPSG:2263
    </CrsButton>
    <FrameButton $w={52} $h={60} $ml={13}>
      <svg width="34" height="34" viewBox="0 0 34 34">
        <path d="M17 2c9 0 15 5 15 13 0 6-3 10-5 12l3 6-10-5c-12 1-18-5-18-13S8 2 17 2z" fill="#5f5f5f" />
        <circle cx="10" cy="15" r="2.500" fill="#fff" />
        <circle cx="17" cy="15" r="2.500" fill="#fff" />
        <circle cx="24" cy="15" r="2.500" fill="#fff" />
      </svg>
    </FrameButton>
  </StatusBar>
);

/* ---------- layer properties dialog ---------- */

const Dialog = styled.div`
  position: absolute;
  left: 950px;
  top: 136px;
  width: 1650px;
  height: 1516px;
  border-radius: 20px;
  display: flex;
  flex-direction: column;
  box-shadow: 0 0 0 1px rgba(0, 0, 0, 0.25), 0 36px 80px rgba(0, 0, 0, 0.5);
`;
const DialogTitle = styled(TitleBar)`
  height: 56px;
  border-radius: 20px 20px 0 0;
  border-bottom: 1px solid #cfcbc8;
  padding: 0 16px;
`;
const DialogBody = styled.div`
  flex: 1;
  display: flex;
  min-height: 0;
`;
const Side = styled.div`
  width: 300px;
  flex: none;
  background: #5c5c5c;
  border-radius: 0 0 0 20px;
  padding: 2px 2px 0;
`;
const SideSearch = styled.div`
  height: 38px;
  background: #fff;
  padding: 6px 0 0 16px;
  margin-bottom: 22px;
`;
const SideItem = styled.div<{ $gap?: number; $sel?: boolean }>`
  height: 76px;
  margin: ${(p) => p.$gap || 0}px -2px 0;
  padding: 0 0 1px ${(p) => (p.$sel ? 18 : 12)}px;
  display: flex;
  align-items: center;
  gap: ${(p) => (p.$sel ? 22 : 14)}px;
  color: ${(p) => (p.$sel ? "#262626" : "#fff")};
  background: ${(p) => (p.$sel ? "#ececec" : "transparent")};
  white-space: nowrap;
`;

const sideItems: { name: string; gap?: number; sel?: boolean; icon: React.ReactNode }[] = [
  {
    name: "Information",
    icon: (
      <g>
        <circle cx="24" cy="24" r="23" fill="#6d9bd0" stroke="#4270a8" />
        <path d="M4 22A20 20 0 0124 4q6 0 9 2Q14 8 4 22z" fill="#9dbde0" />
        <text x="24" y="40" fontSize="46" fontFamily="Liberation Serif, serif" fontStyle="italic" fontWeight="700" fill="#fff" textAnchor="middle">
          i
        </text>
      </g>
    ),
  },
  {
    name: "Source",
    icon: (
      <g>
        <Gear cx={30} cy={28} r={15} fill="#e8eaec" />
        <path d="M22 20L44 41" stroke="#222" strokeWidth="9" strokeLinecap="round" />
        <path d="M24 22L44 40.500" stroke="#eedc82" strokeWidth="6" strokeLinecap="round" />
        <circle cx="43" cy="40" r="2.500" fill="#555" stroke="#222" />
        <path d="M6 2q9-2 13 4 3 5 1 9l5 4-5 6-6-5q-7 2-13-4-2-3 0-6 5 5 9 3 3-5-4-11z" fill="#eee" stroke="#222" strokeWidth="1.500" />
      </g>
    ),
  },
  {
    name: "Symbology",
    sel: true,
    icon: (
      <g>
        <path d="M11 6l25 5-6 12-23-6z" fill="#ece59a" />
        <path d="M6 15l24 6-6 12-21-8z" fill="#8ea9d6" />
        <path d="M3 25l20 8-4 9L0 33z" fill="#e06470" />
        <g transform="translate(11 2) scale(.88)">
          <Brush handle="#cfae78" bristle="#d9c39b" stroke="#a58658" />
        </g>
      </g>
    ),
  },
  {
    name: "Labels",
    icon: (
      <g>
        <path d="M1 24l9-11h37v23H10z" fill="#fce94f" stroke="#c4a000" strokeWidth="1.800" />
        <text x="27" y="30" fontSize="17" fontWeight="700" fill="#333" textAnchor="middle">abc</text>
      </g>
    ),
  },
  {
    name: "Masks",
    icon: (
      <g>
        <path d="M4 13q6-2 12-1 8-6 16 0 8-2 14 3 7 6 2 16-3 5-10 5H9q-8 1-10-5-4-9 5-18z" fill="#e6edff" />
        <text x="24" y="31" fontSize="23" fontWeight="700" fill="#333" textAnchor="middle">abc</text>
      </g>
    ),
  },
  {
    name: "3D View",
    icon: (
      <g strokeWidth="2" strokeLinejoin="round">
        <path d="M24 1l20 12-20 12L4 13z" fill="#f58c8c" stroke="#a40000" />
        <path d="M2 16l21 12v19L2 36z" fill="#8ae234" stroke="#4e9a06" />
        <path d="M46 16L26 28v19l20-11z" fill="#fce94f" stroke="#c4a000" />
      </g>
    ),
  },
  {
    name: "Diagrams",
    icon: (
      <g strokeWidth="1.800">
        <path d="M17 16V31A15 15 0 014 9z" fill="#0db14b" stroke="#045c24" />
        <path d="M17 16L4 9a15 15 0 0126 0z" fill="#fce000" stroke="#d09a00" />
        <path d="M17 16l13-7a15 15 0 01-13 22z" fill="#c00d0d" stroke="#5a0000" />
        <path d="M20 32h8v14h-8z" fill="#fcd21c" stroke="#f58a1f" />
        <path d="M30 19h7v27h-7z" fill="#1aa648" stroke="#045c24" />
        <path d="M39 34h8v12h-8z" fill="#c00d0d" stroke="#5a0000" />
      </g>
    ),
  },
  {
    name: "Fields",
    icon: (
      <g>
        <path d="M2 3h44v43H2z" fill="#e9edf1" stroke="#6d97c4" strokeWidth="2" />
        <path d="M3 4h42v10H3z" fill="#b8d0ea" />
        <path d="M8 9h32M8 19h32M8 25h32M8 32h32M8 39h32" stroke="#6d97c4" strokeWidth="2.200" />
        <path d="M12 1h11v46H12z" fill="#ece3b4" stroke="#fcf04f" strokeWidth="2.500" />
      </g>
    ),
  },
  {
    name: "Attributes Form",
    icon: (
      <g>
        <path d="M2 3h44v43H2z" fill="#e6e6e6" stroke="#6d97c4" strokeWidth="2" />
        <path d="M8 15h9M8 33h9" stroke="#36597d" strokeWidth="4" />
        <rect x="20" y="9" width="20" height="12" rx="2" fill="#fff" stroke="#6d97c4" strokeWidth="2" />
        <rect x="20" y="27" width="20" height="12" rx="2" fill="#fff" stroke="#6d97c4" strokeWidth="2" />
      </g>
    ),
  },
  {
    name: "Joins",
    gap: 8,
    icon: (
      <g>
        <circle cx="5" cy="24" r="5.500" fill="#6d97c4" />
        <path d="M14 24L48 3v42z" fill="#5583b8" stroke="#3c6797" />
      </g>
    ),
  },
  {
    name: "Auxiliary Storage",
    gap: 4,
    icon: (
      <g>
        <path d="M15 0h22l11 11v35H15z" fill="#fff" stroke="#aaa" />
        <path d="M37 0v11h11z" fill="#ccc" stroke="#888" />
        <path d="M1 16v26q0 5 14 5t15-5V16z" fill="#a0a0a0" stroke="#444" />
        <path d="M8 18v28" stroke="#e8e8e8" strokeWidth="5" />
        <ellipse cx="15.500" cy="16" rx="14.500" ry="5" fill="#e0e0e0" stroke="#555" />
        <path d="M1 31q3 5 14 5t15-5" stroke="#eee" strokeWidth="2" />
      </g>
    ),
  },
  {
    name: "Actions",
    gap: 4,
    icon: (
      <g>
        <Gear cx={30} cy={19} r={16} />
        <path d="M26 12l12 7-12 7z" fill="#fff" />
        <Gear cx={8} cy={40} r={7} />
      </g>
    ),
  },
  {
    name: "Display",
    icon: (
      <g>
        <path d="M10 3h28q8 0 8 7v13q0 8-8 8H25q-4 9-12 13 3-7 2-13h-5q-8 0-8-8V10q0-7 8-7z" fill="#e8dc8b" stroke="#b89b1c" strokeWidth="1.500" />
        <path d="M7 20v-7q0-6 9-6h8q-12 2-13 13z" fill="#fff" />
      </g>
    ),
  },
  { name: "Rendering", icon: <Brush handle="#e0982f" bristle="#f2cf8f" stroke="#9a6210" /> },
  { name: "Temporal", icon: <Clock /> },
  { name: "Variables", icon: <Epsilon x={24} y={42} size={78} /> },
  {
    name: "Metadata",
    icon: (
      <g>
        <path d="M8 2h24l11 11v33H8z" fill="#fff" stroke="#888" />
        <path d="M32 2v11h9" fill="#ddd" stroke="#888" />
        <path d="M13 17h20M13 23h14M13 29h14M13 35h24M13 41h24" stroke="#999" strokeWidth="2" />
        <path d="M31 28L42 9l6 4-11 19z" fill="#ef7a35" stroke="#a8461a" />
        <path d="M42 9l2-4 6 4-2 4z" fill="#ddd" />
        <path d="M31 28l6 4-8 4z" fill="#ccc" stroke="#555" />
      </g>
    ),
  },
  {
    name: "Dependencies",
    icon: (
      <g>
        <path d="M5 3h26v26H5z" fill="#eee" stroke="#777" />
        <path d="M20 14h26v31H20z" fill="#f4f4f4" stroke="#777" />
        <path d="M24 5h19v10h6l-10 11-11-11h6v-3H24z" fill="#7aa5e6" stroke="#2d5fae" strokeWidth="1.500" />
        <path d="M26 43H6V28H0l11-12 11 12h-6v7h10z" fill="#7aa5e6" stroke="#2d5fae" strokeWidth="1.500" />
      </g>
    ),
  },
];

const Splitter = styled.span`
  width: 12px;
  height: 12px;
  border-radius: 6px;
  background: #d2d2d2;
  align-self: flex-start;
  margin: 724px 0 0 1px;
`;
const Form = styled.div`
  flex: 1;
  padding: 0 24px 0 13px;
  display: flex;
  flex-direction: column;
  color: #000;
`;
const FormShell = styled.div`
  flex: 1;
  display: flex;
  background: #ececec;
  border-radius: 0 0 20px 0;
`;
const Line = styled.div<{ $mt: number; $h: number; $pl?: number }>`
  margin-top: ${(p) => p.$mt}px;
  height: ${(p) => p.$h}px;
  padding-left: ${(p) => p.$pl || 0}px;
  flex: none;
  display: flex;
  align-items: center;
`;
const Label = styled.label<{ $w?: number; $pt?: number }>`
  width: ${(p) => p.$w || 198}px;
  padding-top: ${(p) => p.$pt ?? 2}px;
  flex: none;
  white-space: nowrap;
`;
const Caption = styled.span<{ $ml: number }>`
  margin-left: ${(p) => p.$ml}px;
  color: #262626;
  white-space: nowrap;
`;
const Combo = styled.div<{ $w: number; $ml: number; $pl: number }>`
  width: ${(p) => p.$w}px;
  height: 40px;
  margin-left: ${(p) => p.$ml}px;
  padding: 0 4px 1px ${(p) => p.$pl}px;
  border-radius: 9px;
  background: #fff;
  box-shadow: 0 1px 2px rgba(0, 0, 0, 0.32);
  display: flex;
  align-items: center;
  & > span:last-child {
    margin-left: auto;
  }
`;
const BlueArrow = styled.span`
  width: 32px;
  height: 32px;
  border-radius: 7px;
  background: linear-gradient(#2a90ff, #007aff);
  display: flex;
  flex-direction: column;
  gap: 4px;
  align-items: center;
  justify-content: center;
`;
const TypeTag = styled.span`
  font-size: 18px;
  font-weight: 600;
  color: #555;
  width: 39px;
`;
const Frame = styled.div`
  width: 1088px;
  height: 100%;
  border: 2px solid #acacac;
  background: linear-gradient(#e2e2e2, #f7f7f7);
  padding: 10px 8px;
  display: flex;
`;
const SymbolFill = styled.div`
  flex: 1;
  background: #fff4ea;
`;
const RampFill = styled.div`
  flex: 1;
  background: linear-gradient(90deg, #fff5eb, #fee6ce 13%, #fdd0a2 26%, #fdae6b 39%, #fd8d3c 52%, #f16913 65%, #d94801 78%, #a63603 90%, #7f2704);
`;
const FrameMenu = styled.span`
  align-self: flex-end;
  padding: 0 0 4px 0;
`;
const Tabs = styled.div`
  height: 48px;
  flex: none;
  margin-top: 20px;
  display: flex;
  border: 2px solid #a0a0a0;
  border-right: 0;
  background: #bdbdbd;
  font-size: 22.500px;
  color: #111;
`;
const Tab = styled.div<{ $w: number; $on?: boolean }>`
  width: ${(p) => p.$w}px;
  display: flex;
  align-items: center;
  justify-content: center;
  border-right: ${(p) => (p.$on ? 2 : 4)}px solid #a0a0a0;
  background: ${(p) => (p.$on ? "#d3d3d3" : "transparent")};
`;
const Button = styled.div<{ $w: number; $ml?: number; $mr?: number; $primary?: boolean }>`
  width: ${(p) => p.$w}px;
  height: 40px;
  margin-left: ${(p) => p.$ml || 0}px;
  margin-right: ${(p) => p.$mr || 0}px;
  padding-bottom: 1px;
  border-radius: 9px;
  display: flex;
  align-items: center;
  justify-content: center;
  gap: 20px;
  flex: none;
  color: ${(p) => (p.$primary ? "#fff" : "#262626")};
  background: ${(p) => (p.$primary ? "linear-gradient(#2a90ff, #007aff)" : "#fff")};
  box-shadow: 0 1px 2px rgba(0, 0, 0, 0.32);
`;
const ClearSvg = styled.svg<{ $ml: number }>`
  margin-left: ${(p) => p.$ml}px;
`;
const Clear = ({ ml }: { ml: number }) => (
  <ClearSvg $ml={ml} width="26" height="20" viewBox="0 0 26 20">
    <path d="M0 10L8 0h18v20H8z" fill="#959595" />
    <path d="M10 5l10 10M20 5L10 15" stroke="#fff" strokeWidth="2" />
  </ClearSvg>
);
const Precision = styled.span`
  width: 106px;
  overflow: hidden;
  white-space: nowrap;
  flex: none;
`;
const Grow = styled.span`
  flex: 1;
`;
const Section = styled.span`
  font-weight: 700;
  font-size: 26.3px;
  margin-left: 20px;
`;

/* ---------- histogram ---------- */

/* chart pixel space: origin is the chart's top left corner */
const yOf = (v: number) => 448.5 - v * 0.53775;
const xOf = (v: number) => 316.4 + v * 0.12672;
const orangeBars = [105, 79, 53, 38, 34];
const brownBars = [23, 30, 20, 23, 17, 13, 18, 12, 8, 8, 4, 11, 8, 8, 4, 4, 4, 4, 4, 0, 4, 4, 4, 0, 4, 0, 4, 4, 4];
const leftBars = [0, 3, 0, 3, 0, 4, 9, 9, 19, 26];

const Histogram = () => (
  <svg width="1300" height="520" viewBox="0 0 1300 520" fontSize="25.500" fill="#262626">
    {[0, 100, 200, 300, 400, 500, 600, 700, 800].map((v) => (
      <g key={v}>
        <path d={`M182 ${yOf(v)}H1234`} stroke="#c6c6c6" strokeWidth="2" />
        <path d={`M160 ${yOf(v)}h17`} stroke="#222" strokeWidth="1.500" />
        <text x="148.500" y={yOf(v) + 10.5} textAnchor="end">
          {v}
        </text>
        {v < 800 && [20, 40, 60, 80].map((m) => <path key={m} d={`M168 ${yOf(v + m)}h9`} stroke="#222" strokeWidth="1.200" />)}
      </g>
    ))}
    <path d="M176.500 18V449" stroke="#222" strokeWidth="1.500" />
    <path d={`M${xOf(-1000)} 462.500H${xOf(7000)}`} stroke="#222" strokeWidth="1.500" />
    {Array.from({ length: 41 }, (_, i) => (
      <path key={i} d={`M${xOf(-1000 + i * 200)} 462v${i % 5 ? 8 : 16}`} stroke="#222" strokeWidth="1.300" />
    ))}
    {[-1000, 0, 1000, 2000, 3000, 4000, 5000, 6000, 7000].map((v) => (
      <text key={v} x={xOf(v)} y="509.500" textAnchor="middle">
        {v}
      </text>
    ))}
    <text transform="translate(89 233) rotate(-90)" textAnchor="middle" fontWeight="700" fontSize="26">
      Count
    </text>
    {leftBars.map((v, i) => (
      <rect key={i} x={295 + i * 2} y={yOf(v)} width="2" height={v * 0.538} fill="#f4efe9" stroke="#999" strokeWidth=".6" />
    ))}
    <path d="M280 448.500h35" stroke="#999" strokeWidth="1.200" />
    {orangeBars.map((v, i) => (
      <rect key={i} x={321 + i * 1.8} y={yOf(v)} width="2" height={v * 0.538} fill="#e25508" />
    ))}
    {brownBars.map((v, i) => (
      <rect key={i} x={331 + i * 2} y={yOf(v)} width="2" height={v * 0.538} fill="#7f2606" />
    ))}
    {[396, 400, 412, 500].map((x) => (
      <rect key={x} x={x} y={yOf(4)} width="2" height="2.200" fill="#7f2606" />
    ))}
    <g fill="#000">
      {[
        [306, "0"],
        [307, "7"],
        [310, "25"],
        [319, "98"],
        [1069, "6017"],
      ].map(([x, t]) => (
        <text key={t} transform={`translate(${x} 12) rotate(-90)`} textAnchor="end">
          {t}
        </text>
      ))}
    </g>
    <path d="M318 6V457" stroke="#000" strokeWidth="6" />
    <path d="M330 6V457M1080 6V457" stroke="#000" strokeWidth="2" />
  </svg>
);

const PropertiesDialog = () => (
  <Dialog>
    <DialogTitle>
      <Light $color="#ed6a5e" />
      <Light />
      <Light $color="#61c554" />
      <Title>Layer Properties — HousingChange_CT — Symbology</Title>
    </DialogTitle>
    <DialogBody>
      <Side>
        <SideSearch>
          <SearchGlyph />
        </SideSearch>
        {sideItems.map((it) => (
          <SideItem key={it.name} $gap={it.gap} $sel={it.sel}>
            <Svg s={52}>{it.icon}</Svg>
            {it.name}
          </SideItem>
        ))}
      </Side>
      <FormShell>
        <Splitter />
        <Form>
          <Line $mt={15} $h={40}>
            <Combo $w={1280} $ml={12} $pl={22}>
              <svg width="26" height="28" viewBox="0 0 26 28" strokeWidth="2">
                <rect x="1" y="1" width="20" height="6" fill="#ffd800" stroke="#ffa600" />
                <rect x="5" y="11" width="20" height="6" fill="#ff5500" stroke="#c93000" />
                <rect x="1" y="21" width="20" height="6" fill="#c00d0d" stroke="#5a0000" />
              </svg>
              <Caption $ml={8}>Graduated</Caption>
              <BlueArrow>
                <svg width="14" height="8" viewBox="0 0 14 8">
                  <path d="M1.500 7L7 1.500 12.500 7" fill="none" stroke="#fff" strokeWidth="3" />
                </svg>
                <Chevron w={15} color="#fff" sw={2.8} />
              </BlueArrow>
            </Combo>
          </Line>
          <Line $mt={39} $h={52}>
            <Label $pt={4}>Value</Label>
            <Combo $w={1016} $ml={10} $pl={6}>
              <TypeTag>123</TypeTag>
              Change1019
              <BlueArrow>
                <Chevron w={15} color="#fff" sw={2.8} />
              </BlueArrow>
            </Combo>
            <FrameButton $w={52} $h={52} $ml={24}>
              <svg width="30" height="32" viewBox="0 0 30 32">
                <Epsilon x={15} y={26} size={46} />
              </svg>
            </FrameButton>
          </Line>
          <Line $mt={28} $h={44}>
            <Label>Symbol</Label>
            <Frame>
              <SymbolFill />
            </Frame>
            <FrameMenu>
              <Chevron w={12} sw={2.6} />
            </FrameMenu>
          </Line>
          <Line $mt={27} $h={40}>
            <Label $w={199}>Legend format</Label>
            <Field $w={760} $pl={2}>
              %1 - %2
            </Field>
            <Field $w={159} $h={36} $ml={25} $pl={0}>
              <Precision>recision 1</Precision>
              <Clear ml={9} />
            </Field>
            <Stepper ml={4} />
            <Space $w={24} />
            <Check on blue />
            <Caption $ml={8}>Trim</Caption>
          </Line>
          <Line $mt={29} $h={56}>
            <Label>Color ramp</Label>
            <Frame>
              <RampFill />
            </Frame>
            <FrameMenu>
              <Chevron w={12} sw={2.6} />
            </FrameMenu>
          </Line>
          <Tabs>
            <Tab $w={202}>Classes</Tab>
            <Tab $w={229} $on>
              Histogram
            </Tab>
          </Tabs>
          <Line $mt={50} $h={40} $pl={66}>
            <Button $w={370}>Load Values</Button>
          </Line>
          <Line $mt={20} $h={520}>
            <Histogram />
          </Line>
          <Line $mt={13} $h={40} $pl={64}>
            <span>Histogram bins</span>
            <Grow />
            <Field $w={340} $h={36} $pl={2}>
              633
              <Clear ml={248} />
            </Field>
            <Stepper ml={4} />
            <Space $w={65} />
          </Line>
          <Line $mt={21} $h={28} $pl={862}>
            <Check />
            <Caption $ml={8}>Show mean value</Caption>
          </Line>
          <Line $mt={18} $h={28} $pl={862}>
            <Check />
            <Caption $ml={8}>Show standard deviation</Caption>
          </Line>
          <Line $mt={96} $h={32} $pl={10}>
            <svg width="14" height="22" viewBox="0 0 14 22">
              <path d="M1 1l12 10L1 21z" fill="#444" stroke="#111" />
            </svg>
            <Section>Layer Rendering</Section>
          </Line>
          <Line $mt={56} $h={40} $pl={2}>
            <Button $w={112}>Help</Button>
            <Button $w={136} $ml={30}>
              <Caption $ml={13}>Style</Caption>
              <BlueArrow>
                <Chevron w={15} color="#fff" sw={2.8} />
              </BlueArrow>
            </Button>
            <Button $w={128} $ml={30}>
              Apply
            </Button>
            <Grow />
            <Button $w={134}>Cancel</Button>
            <Button $w={134} $ml={32} $mr={-4} $primary>
              OK
            </Button>
          </Line>
        </Form>
      </FormShell>
    </DialogBody>
  </Dialog>
);

const MainToolbar = () => (
  <Toolbar>
    <Handle />
    {[I.newDoc, I.open, I.save, I.layout, I.manager, I.style].map((icon, i) => (
      <Tool key={i}>{icon}</Tool>
    ))}
    <Handle />
    <Tool $active>{I.pan}</Tool>
    {[I.panSel, I.zoomIn, I.zoomOut, I.zoomFull, I.zoomSel, I.zoomLayer].map((icon, i) => (
      <Tool key={i}>{icon}</Tool>
    ))}
    <Tool $off>{I.zoomNative}</Tool>
    <Tool>{I.zoomLast}</Tool>
    <Tool $off>{I.zoomNext}</Tool>
    {[I.newMap, I.new3d, I.newBookmark, I.bookmarks, I.clock, I.refresh].map((icon, i) => (
      <Tool key={i}>{icon}</Tool>
    ))}
    <Handle />
    <Tool $off>{I.pencils}</Tool>
    <Tool>{I.pencil}</Tool>
    <Tool $off>{I.saveEdits}</Tool>
    <Tool $off>{I.addPoly}</Tool>
    <Tool $off $w={94} $pl={14}>
      {I.vertex}
      <LowMenu>
        <Chevron w={13} color="#909090" />
      </LowMenu>
    </Tool>
    {[I.attrTable, I.trash, I.cut, I.copy, I.paste].map((icon, i) => (
      <Tool key={i} $off>
        {icon}
      </Tool>
    ))}
    <More $ml={52}>
      <DoubleArrow />
    </More>
    <Handle />
    <Tool $w={94} $pl={12}>
      {I.select}
      <LowMenu>
        <Chevron w={13} />
      </LowMenu>
    </Tool>
    <More>
      <DoubleArrow />
    </More>
    <Handle />
    <Tool>{I.identify}</Tool>
    <More>
      <DoubleArrow />
    </More>
    <Handle />
    <Tool>{I.python}</Tool>
    <More>
      <DoubleArrow />
    </More>
    <Handle />
  </Toolbar>
);

export default function App() {
  return (
    <Desktop>
      <GlobalStyle />
      <AppWindow>
        <TitleBar>
          <Light />
          <Light />
          <Light />
          <Title>*Tutorial_01 — QGIS</Title>
        </TitleBar>
        <MainToolbar />
        <Body>
          <Dock>
            <Handle row />
            {dockIcons.map((d, i) => (
              <DockTool key={i}>
                <Svg>{d.icon}</Svg>
                {d.menu && <Chevron w={13} sw={2.8} />}
              </DockTool>
            ))}
          </Dock>
          <LayersPanel />
          <Canvas>
            <MapScrap width="32" height="16" viewBox="0 0 32 16">
              <path d="M1 0h30v8q-12 1-14 5-6 4-9 1Q2 8 1 0z" fill="#5a1c04" />
            </MapScrap>
          </Canvas>
        </Body>
        <Status />
      </AppWindow>
      <PropertiesDialog />
    </Desktop>
  );
}
